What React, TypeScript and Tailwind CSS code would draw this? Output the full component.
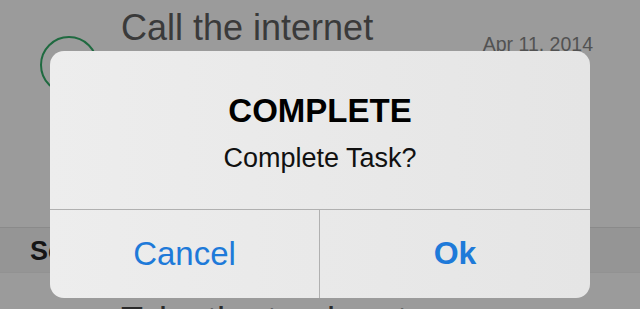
export default function App() {
  return (
    <div className="relative h-[309px] w-[640px] overflow-hidden bg-[#9b9b9b] font-['Liberation_Sans',Arial,sans-serif]">
      {/* Task row */}
      <div className="flex h-[228px] items-start border-b border-[#8a8a8a]">
        <div className="ml-[40px] mt-[36px] h-[58px] w-[58px] shrink-0 rounded-full border-2 border-[#1f6a40]" />
        <div className="ml-[23px] flex-1 pt-[10px] text-[36px] leading-none text-[#3a3a3a]">Call the internet</div>
        <div className="mr-[47px] mt-[35px] text-[19.5px] leading-none text-[#525252]">Apr 11, 2014</div>
      </div>

      {/* Section header */}
      <div className="h-[45px] border-b border-[#929292] bg-[#959595] pl-[30px] pt-[10px] text-[27px] font-bold leading-none text-[#151515]">
        Someday
      </div>

      {/* Next row */}
      <div className="pl-[121px] pt-[30px] text-[36px] leading-none text-[#2a2a2a]">Take the trash out</div>

      {/* Alert */}
      <div className="absolute left-[50px] top-[51px] flex h-[247px] w-[540px] flex-col overflow-hidden rounded-[14px] bg-gradient-to-r from-[#ededed] to-[#e5e5e5]">
        <div className="flex h-[159px] flex-col items-center border-b border-[#b0b0b0] pt-[43px]">
          <div className="text-[33px] font-bold leading-none text-black">COMPLETE</div>
          <div className="mt-[18px] text-[27px] leading-none text-[#111]">Complete Task?</div>
        </div>
        <div className="grid flex-1 grid-cols-2">
          <button className="border-r border-[#b0b0b0] pb-[2px] text-[33px] leading-none text-[#1e7ad9]">Cancel</button>
          <button className="pb-[2px] text-[32px] font-bold leading-none text-[#1e7ad9]">Ok</button>
        </div>
      </div>
    </div>
  )
}
